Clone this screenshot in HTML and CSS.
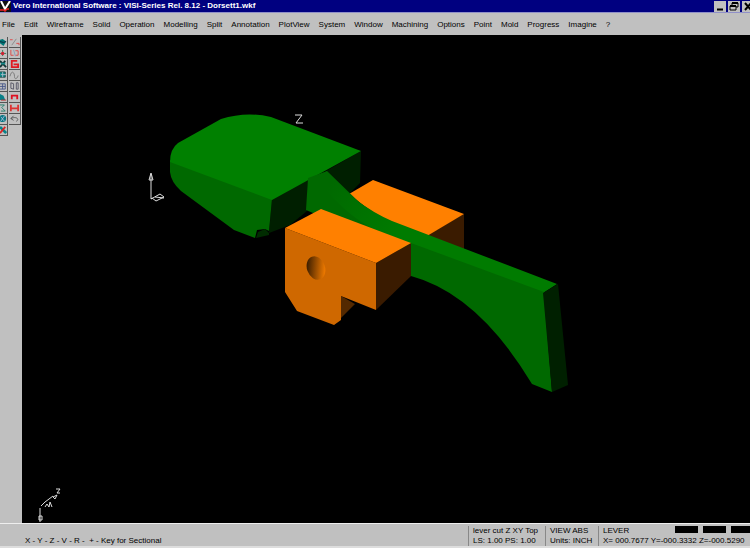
FILE: index.html
```
<!DOCTYPE html>
<html lang="en">
<head>
    <meta charset="UTF-8">
    <meta name="viewport" content="width=device-width, initial-scale=1.0">
    <title>VISI-Series</title>
    <link rel="stylesheet" href="styles.css">
</head>
<body>
    <header class="titlebar">
        <svg class="logo" viewBox="0 0 11 11" aria-hidden="true">
            <rect width="11" height="11" fill="#111"/>
            <path d="M1 0 L5 8 L10 0" fill="none" stroke="#fff" stroke-width="2"/>
            <path d="M0 9 H4 L5 10 L7 8 H9" fill="none" stroke="#e22" stroke-width="1.5"/>
        </svg>
        <h1>Vero International Software : VISI-Series Rel. 8.12 - Dorsett1.wkf</h1>
        <div class="window-buttons">
            <button type="button" aria-label="Minimize"><svg viewBox="0 0 12 11"><path d="M3 8.500h6" stroke="#000" stroke-width="2"/></svg></button>
            <button type="button" aria-label="Restore"><svg viewBox="0 0 12 11"><path d="M4 4V2h6v4H8M2 5h6v4H2z" fill="none" stroke="#000"/><path d="M4 2h6M2 5h6" stroke="#000" stroke-width="2"/></svg></button>
            <button type="button" aria-label="Close"><svg viewBox="0 0 12 11"><path d="M3 2l6 7M9 2L3 9" stroke="#000" stroke-width="2"/></svg></button>
        </div>
    </header>

    <nav class="menubar">
        <button type="button">File</button>
        <button type="button">Edit</button>
        <button type="button">Wireframe</button>
        <button type="button">Solid</button>
        <button type="button">Operation</button>
        <button type="button">Modelling</button>
        <button type="button">Split</button>
        <button type="button">Annotation</button>
        <button type="button">PlotView</button>
        <button type="button">System</button>
        <button type="button">Window</button>
        <button type="button">Machining</button>
        <button type="button">Options</button>
        <button type="button">Point</button>
        <button type="button">Mold</button>
        <button type="button">Progress</button>
        <button type="button">Imagine</button>
        <button type="button">?</button>
    </nav>

    <main class="workspace">
        <aside class="toolbox">
            <button type="button" aria-label="Shade"><svg viewBox="0 0 8 11"><path d="M0 3l3-1 4 3-3 5-4-3z" fill="#077"/><path d="M0 5l4 1 3-1" stroke="#123" fill="none"/></svg></button>
            <button type="button" aria-label="Segment"><svg viewBox="0 0 12 11"><path d="M3 9l5-7" stroke="#888"/><path d="M1 3h3M8 7h3v2" stroke="#d44" fill="none"/></svg></button>
            <button type="button" aria-label="Origin"><svg viewBox="0 0 8 11"><path d="M0 6h7M3 2v7" stroke="#275"/><circle cx="3" cy="6" r="2" fill="#c23"/></svg></button>
            <button type="button" aria-label="Points"><svg viewBox="0 0 12 11"><path d="M2 2v6h3M7 3h3v5H7" stroke="#d44" fill="none"/><path d="M5 2l2 7" stroke="#89b"/></svg></button>
            <button type="button" aria-label="Trim"><svg viewBox="0 0 8 11"><path d="M0 2l7 7M0 9l6-7" stroke="#133" stroke-width="2"/><path d="M1 5h5" stroke="#198b8b" stroke-width="2"/></svg></button>
            <button type="button" aria-label="Profile"><svg viewBox="0 0 12 11"><path d="M9 2H3v7h7V6H5" fill="none" stroke="#e01b22" stroke-width="2"/></svg></button>
            <button type="button" aria-label="Surface"><svg viewBox="0 0 8 11"><path d="M0 2h6v6H0" fill="#188" stroke="#244"/><path d="M1 5h6M3 2v6" stroke="#abc"/></svg></button>
            <button type="button" aria-label="Curve"><svg viewBox="0 0 12 11"><path d="M1 7c2-8 5-4 5 0s3 3 4-1" fill="none" stroke="#777"/></svg></button>
            <button type="button" aria-label="Solid"><svg viewBox="0 0 8 11"><path d="M0 3h6v6H0M3 3v6M0 6h6" fill="none" stroke="#458"/></svg></button>
            <button type="button" aria-label="Columns"><svg viewBox="0 0 12 11"><path d="M2 2v6l3 1V3zM8 2v7h2V2z" fill="none" stroke="#556"/></svg></button>
            <button type="button" aria-label="Rotate"><svg viewBox="0 0 8 11"><path d="M0 2l4 2 2 5H0z" fill="#087f88"/><path d="M1 9h6" stroke="#b22"/></svg></button>
            <button type="button" aria-label="Fillet"><svg viewBox="0 0 12 11"><path d="M3 8V4h6v4" fill="none" stroke="#d12" stroke-width="2"/></svg></button>
            <button type="button" aria-label="Symmetry"><svg viewBox="0 0 8 11"><path d="M0 2h5L2 5l4 4H1" fill="none" stroke="#187b68"/></svg></button>
            <button type="button" aria-label="Mirror"><svg viewBox="0 0 12 11"><path d="M2 2v7M10 2v7M3 6h6" fill="none" stroke="#d33" stroke-width="2"/></svg></button>
            <button type="button" aria-label="Globe"><svg viewBox="0 0 8 11"><circle cx="3" cy="5" r="4" fill="#087884"/><path d="M1 3l4 5M5 2L1 8" stroke="#abd"/></svg></button>
            <button type="button" aria-label="Undo"><svg viewBox="0 0 12 11"><path d="M2 5l3-3M2 5l3 2M2 5c6-3 10 1 6 3" fill="none" stroke="#555"/></svg></button>
            <button type="button" aria-label="Delete"><svg viewBox="0 0 8 11"><path d="M0 2l7 7" stroke="#07838a" stroke-width="3"/><path d="M0 9l6-7" stroke="#d22" stroke-width="2"/></svg></button>
        </aside>

        <svg class="viewport" viewBox="22 35 728 488" preserveAspectRatio="xMinYMin meet" role="img" aria-label="Lever model">
            <defs>
                <linearGradient id="hole" x1="0" y1="0" x2="1" y2="0.600">
                    <stop offset="0.150" stop-color="#3a1d00"/>
                    <stop offset="0.550" stop-color="#8f4800"/>
                    <stop offset="1" stop-color="#ed7900"/>
                </linearGradient>
                <linearGradient id="arm" gradientUnits="userSpaceOnUse" x1="330" y1="185" x2="400" y2="230">
                    <stop offset="0" stop-color="#006900"/>
                    <stop offset="1" stop-color="#007b00"/>
                </linearGradient>
            </defs>

            <!-- head of the lever -->
            <path d="M326 171 L361 151 L360 183 L349 194 Z" fill="#001f00"/>
            <path d="M272 199 L308 178 L307 211 L290 225 L269 233 Z" fill="#001f00"/>
            <path d="M170 160 L272 199 L269 231 L265 229 L257 230 L255 238 L234 230 L181 191 Q171 182 170 172 Z" fill="#006900"/>
            <path d="M256 238 L258 232 L265 229 L269 233 L269 235 Z" fill="#002c00"/>
            <path d="M170 162 Q170 149 178 143 L221 119 Q246 111 271 117 L361 151 L272 200 Z" fill="#008000"/>

            <!-- rear block -->
            <path d="M427 235 L464 214 V250 Z" fill="#3a1b00"/>
            <path d="M349 194 L373 180 L464 214 L427 236 L382 220 Z" fill="#ff8000"/>

            <!-- arm -->
            <path d="M308 178 L327 171 L360 203 L412 239 V256 L306 210 Z" fill="#006900"/>
            <path d="M326 171 Q355 205 392 221 L557 284 L543 293 L411 244 L374 229 Q350 218 322 186 Z" fill="url(#arm)"/>
            <path d="M411 243 L544 292 L552 392 L532 384 Q478 294 411 276 Z" fill="#006900"/>
            <path d="M543 293 L558 284 L568 385 L552 392 Z" fill="#002000"/>

            <!-- front block -->
            <path d="M341 296 L355 304 L341 318 Z" fill="#542900"/>
            <path d="M376 263 L411 243 V276 L376 310 Z" fill="#3a1b00"/>
            <path d="M285 228 L376 263 V310 L341 296 V320 L334 325 L297 311 L285 292 Z" fill="#cf6800"/>
            <path d="M285 228 L321 209 L411 243 L376 263 Z" fill="#ff8000"/>
            <ellipse cx="316" cy="268" rx="9" ry="12" transform="rotate(-20 316 268)" fill="url(#hole)"/>

            <g class="axis">
                <path d="M295 115h7l-6 8h7"/>
                <path d="M151 199V174M149 180l2-7 2 7zM151 199l9-5 4 3-8 4-4-3zM155 197l9 1"/>
                <path d="M40 522V508M39 516h3v4h-3zM41 506l4-4 8-6M45 507l2-3 2 3 1-5 2 5M53 497l4-2-2 4zM56 489h4l-3 4h3"/>
            </g>
        </svg>
    </main>

    <footer class="statusbar">
        <p class="prompt">X - Y - Z - V - R -&nbsp; + - Key for Sectional</p>
        <div class="cell scale"><span>lever cut Z XY Top</span><span>LS: 1.00 PS: 1.00</span></div>
        <div class="cell units"><span>VIEW ABS</span><span>Units: INCH</span></div>
        <div class="cell layer">
            <div class="layer-row"><span>LEVER</span><i class="swatch"></i><i class="swatch"></i><i class="swatch"></i></div>
            <span>X= 000.7677 Y=-000.3332 Z=-000.5290</span>
        </div>
    </footer>
</body>
</html>
```
FILE: styles.css
```
* {
    box-sizing: border-box;
}
body {
    margin: 0;
    min-height: 100vh;
    display: flex;
    flex-direction: column;
    background: #c0c0c0;
    color: #000;
    font-family: "Liberation Sans", Arial, sans-serif;
    font-size: 8px;
    line-height: 10px;
    overflow: hidden;
}
button {
    padding: 0;
    border: 0;
    background: #c0c0c0;
    color: #000;
    font: inherit;
}
svg {
    display: block;
}
.titlebar {
    display: flex;
    align-items: center;
    gap: 2px;
    height: 13px;
    background: #000080;
    border-bottom: 1px solid #9090c8;
}
.logo {
    width: 11px;
    height: 11px;
}
h1 {
    flex: 1;
    margin: 0;
    color: #fff;
    font-size: 8px;
    font-weight: bold;
    line-height: 10px;
}
.window-buttons {
    display: flex;
    gap: 2px;
    margin-right: -4px;
}
.window-buttons button {
    width: 12px;
    height: 11px;
}
.menubar {
    display: flex;
    align-items: center;
    gap: 9px;
    height: 22px;
    padding: 2px 2px 0;
}
.workspace {
    flex: 1;
    display: flex;
    align-items: stretch;
}
.toolbox {
    width: 22px;
    display: grid;
    grid-template-columns: 8px 12px;
    grid-auto-rows: 11px;
    column-gap: 1px;
    align-content: start;
    padding-top: 2px;
}
.toolbox button {
    border-right: 1px solid #555;
    border-bottom: 1px solid #555;
}
.toolbox svg {
    width: 100%;
    height: 10px;
}
.viewport {
    flex: 1;
    min-width: 0;
    background: #000;
}
.axis path {
    fill: none;
    stroke: #ddd;
    stroke-width: 1;
}
.statusbar {
    display: flex;
    align-items: flex-end;
    height: 25px;
    border-top: 1px solid #eee;
    border-bottom: 2px solid #ddd;
    line-height: 10px;
}
.prompt {
    flex: 1;
    margin: 0;
    padding-left: 25px;
}
.cell {
    display: flex;
    flex-direction: column;
    padding-left: 4px;
    border-left: 1px solid #888;
    white-space: pre;
}
.scale {
    width: 77px;
}
.units {
    width: 53px;
}
.layer {
    width: 152px;
}
.layer-row {
    display: flex;
    align-items: flex-start;
    gap: 5px;
    margin-right: -4px;
}
.layer-row span {
    flex: 1;
}
.swatch {
    width: 23px;
    height: 7px;
    background: #000;
}
```
